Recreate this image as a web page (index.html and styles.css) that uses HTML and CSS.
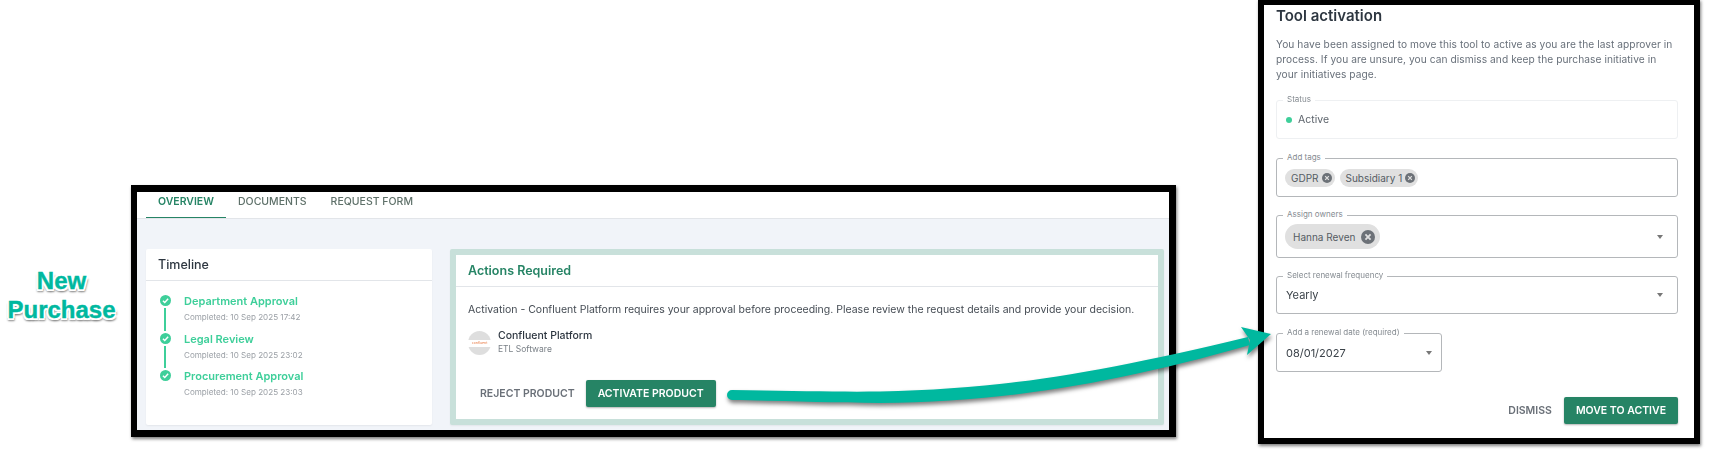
FILE: index.html
```html
<!DOCTYPE html>
<html lang="en">
<head>
    <meta charset="UTF-8">
    <title>New Purchase - Tool activation</title>
    <link rel="stylesheet" href="styles.css">
</head>
<body>
    <div class="page">
        <div class="side-label">New<br>Purchase</div>

        <section class="frame">
            <nav class="tabs">
                <span class="tab active">OVERVIEW</span>
                <span class="tab">DOCUMENTS</span>
                <span class="tab">REQUEST FORM</span>
            </nav>
            <div class="content">
                <div class="card timeline">
                    <h2 class="card-title">Timeline</h2>
                    <div class="steps">
                        <div class="step">
                            <div class="step-mark">
                                <svg class="check" viewBox="0 0 12 12"><circle cx="6" cy="6" r="6"/><path d="M3.2 6.2 5.2 8.1 8.9 4.2"/></svg>
                                <span class="step-line"></span>
                            </div>
                            <div>
                                <div class="step-title">Department Approval</div>
                                <div class="step-time">Completed: 10 Sep 2025 17:42</div>
                            </div>
                        </div>
                        <div class="step">
                            <div class="step-mark">
                                <svg class="check" viewBox="0 0 12 12"><circle cx="6" cy="6" r="6"/><path d="M3.2 6.2 5.2 8.1 8.9 4.2"/></svg>
                                <span class="step-line"></span>
                            </div>
                            <div>
                                <div class="step-title">Legal Review</div>
                                <div class="step-time">Completed: 10 Sep 2025 23:02</div>
                            </div>
                        </div>
                        <div class="step">
                            <div class="step-mark">
                                <svg class="check" viewBox="0 0 12 12"><circle cx="6" cy="6" r="6"/><path d="M3.2 6.2 5.2 8.1 8.9 4.2"/></svg>
                            </div>
                            <div>
                                <div class="step-title">Procurement Approval</div>
                                <div class="step-time">Completed: 10 Sep 2025 23:03</div>
                            </div>
                        </div>
                    </div>
                </div>

                <div class="card actions">
                    <h2 class="card-title">Actions Required</h2>
                    <div class="actions-body">
                        <p class="actions-text">Activation - Confluent Platform requires your approval before proceeding. Please review the request details and provide your decision.</p>
                        <div class="product">
                            <div class="product-logo"><span>confluent</span></div>
                            <div class="product-info">
                                <div class="product-name">Confluent Platform</div>
                                <div class="product-type">ETL Software</div>
                            </div>
                        </div>
                        <div class="button-row">
                            <button class="btn-text">REJECT PRODUCT</button>
                            <button class="btn-primary">ACTIVATE PRODUCT</button>
                        </div>
                    </div>
                </div>
            </div>
        </section>

        <section class="frame dialog">
            <h1 class="dialog-title">Tool activation</h1>
            <p class="dialog-text">You have been assigned to move this tool to active as you are the last approver in process. If you are unsure, you can dismiss and keep the purchase initiative in your initiatives page.</p>

            <div class="field field-readonly">
                <span class="field-label">Status</span>
                <span class="dot"></span>
                <span class="status-text">Active</span>
            </div>

            <div class="field">
                <span class="field-label">Add tags</span>
                <span class="chip">GDPR <svg class="chip-x" viewBox="0 0 12 12"><circle cx="6" cy="6" r="6"/><path d="M3.8 3.8 8.2 8.2M8.2 3.8 3.8 8.2"/></svg></span>
                <span class="chip">Subsidiary 1 <svg class="chip-x" viewBox="0 0 12 12"><circle cx="6" cy="6" r="6"/><path d="M3.8 3.8 8.2 8.2M8.2 3.8 3.8 8.2"/></svg></span>
            </div>

            <div class="field field-tall">
                <span class="field-label">Assign owners</span>
                <span class="chip chip-large">Hanna Reven <svg class="chip-x" viewBox="0 0 12 12"><circle cx="6" cy="6" r="6"/><path d="M3.8 3.8 8.2 8.2M8.2 3.8 3.8 8.2"/></svg></span>
                <span class="caret"></span>
            </div>

            <div class="field field-frequency">
                <span class="field-label">Select renewal frequency</span>
                <span class="field-value">Yearly</span>
                <span class="caret"></span>
            </div>

            <div class="field field-date">
                <span class="field-label">Add a renewal date (required)</span>
                <span class="field-value">08/01/2027</span>
                <span class="caret"></span>
            </div>

            <div class="dialog-buttons">
                <button class="btn-text">DISMISS</button>
                <button class="btn-primary">MOVE TO ACTIVE</button>
            </div>
        </section>

        <svg class="arrow" viewBox="0 0 1724 456">
            <path class="arrow-shaft" d="M732 390C790 391 840 392 880 391.5C1000 389 1090 375 1248 337L1250 345C1110 385 1000 402 880 403C830 403 790 401 732 400A5 5 0 0 1 732 390Z"/>
            <polygon class="arrow-shaft" points="1271,334 1241,327 1250,340 1247,355"/>
        </svg>
    </div>
</body>
</html>
```

FILE: styles.css
```css
:root {
    --green: #268465;
    --mint: #3ecf9a;
    --teal: #00b89f;
    --text: #2d3640;
    --muted: #68707a;
    --line: #e2e5e9;
}

* {
    box-sizing: border-box;
    margin: 0;
    padding: 0;
}

body {
    font-family: 'Inter', 'Liberation Sans', sans-serif;
    background: #fff;
    color: var(--text);
    overflow: hidden;
}

.page {
    position: relative;
    display: flex;
    align-items: flex-start;
    width: 1724px;
    height: 456px;
    overflow: hidden;
}

.side-label {
    width: 131px;
    padding: 266px 8px 0 0;
    text-align: center;
    font-family: 'Liberation Sans', sans-serif;
    font-size: 24px;
    font-weight: 700;
    line-height: 29px;
    color: var(--teal);
    -webkit-text-stroke: 0.4px var(--teal);
    text-shadow: 2px 0 0 #fff, -2px 0 0 #fff, 0 2px 0 #fff, 0 -2px 0 #fff,
        1.5px 1.5px 0 #fff, -1.5px 1.5px 0 #fff, 1.5px -1.5px 0 #fff, -1.5px -1.5px 0 #fff,
        2px 3px 2px #888, -1px 3px 2px #888;
}

.frame {
    width: 1045px;
    height: 252px;
    margin-top: 185px;
    border: solid #000;
    border-width: 7px 7px 7px 6px;
    box-shadow: 1px 2px 3px rgba(0, 0, 0, 0.5);
    display: flex;
    flex-direction: column;
    background: #fff;
    filter: blur(0.4px);
}

/* tabs */
.tabs {
    display: flex;
    height: 27px;
    padding-left: 9px;
    border-bottom: 1px solid var(--line);
}

.tab {
    height: 26px;
    padding: 0 12px;
    font-size: 10.5px;
    font-weight: 500;
    line-height: 20px;
    color: #5e7069;
}

.tab.active {
    width: 80px;
    color: var(--green);
    font-weight: 600;
    border-bottom: 1px solid var(--green);
}

.content {
    flex: 1;
    display: flex;
    gap: 18px;
    padding: 30px 5px 5px 9px;
    background: #f1f4f9;
}

.card {
    background: #fff;
    border-radius: 2px;
    box-shadow: 0 1px 2px rgba(0, 0, 0, 0.06);
}

.card-title {
    height: 32px;
    padding-left: 12px;
    font-size: 12.5px;
    font-weight: 500;
    line-height: 32px;
    border-bottom: 1px solid var(--line);
}

/* timeline */
.timeline {
    width: 286px;
}

.steps {
    padding: 12px 0 0 13px;
}

.step {
    display: flex;
    gap: 13px;
    height: 37.5px;
}

.step-mark {
    width: 12px;
    display: flex;
    flex-direction: column;
    align-items: center;
    padding-top: 2px;
}

.check {
    width: 11px;
    height: 11px;
    flex: none;
}

.check circle {
    fill: var(--mint);
}

.check path {
    fill: none;
    stroke: #fff;
    stroke-width: 1.6;
}

.step-line {
    flex: 1;
    width: 2px;
    margin-top: 2px;
    background: var(--mint);
}

.step-title {
    font-size: 11px;
    font-weight: 600;
    line-height: 16px;
    color: var(--mint);
}

.step-time {
    font-size: 8.1px;
    line-height: 16px;
    color: #9a9fa5;
}

/* actions required */
.actions {
    flex: 1;
    border: 6px solid #c8e0da;
}

.actions .card-title {
    color: var(--green);
    font-weight: 600;
}

.actions-body {
    padding: 14px 12px 0;
}

.actions-text {
    font-size: 10.5px;
    line-height: 18px;
    color: #454c54;
}

.product {
    display: flex;
    align-items: flex-start;
    gap: 7px;
    margin-top: 8px;
}

.product-logo {
    width: 23px;
    height: 24px;
    margin-top: 4px;
    border-radius: 50%;
    background: linear-gradient(#dedede 37%, #fff 37%, #fff 65%, #dedede 65%);
    display: flex;
    align-items: center;
    justify-content: center;
    overflow: hidden;
}

.product-logo span {
    font-size: 3.5px;
    color: #e8743b;
}

.product-info {
    padding-top: 2px;
}

.product-name {
    font-size: 10.5px;
    font-weight: 500;
    line-height: 14px;
}

.product-type {
    font-size: 8.5px;
    line-height: 13px;
    color: #7a8087;
}

.button-row {
    display: flex;
    margin-top: 24px;
}

.btn-text,
.btn-primary {
    height: 27px;
    padding: 0 12px;
    border: none;
    border-radius: 2px;
    font-family: inherit;
    font-size: 10.5px;
    font-weight: 600;
    background: none;
    color: #6a7078;
}

.button-row .btn-text {
    padding-right: 11px;
}

.btn-primary {
    background: var(--green);
    color: #fff;
    box-shadow: 0 1px 2px rgba(0, 0, 0, 0.3);
}

/* dialog */
.dialog {
    width: 442px;
    height: 445px;
    margin: -1px 0 0 82px;
    padding: 1px 16px 0 12px;
    border-width: 6px;
}

.dialog-title {
    font-size: 15px;
    font-weight: 600;
    line-height: 20px;
}

.dialog-text {
    margin: 10.5px 0 18.5px;
    font-size: 10.2px;
    line-height: 15px;
    letter-spacing: 0.06px;
    color: var(--muted);
}

.field {
    position: relative;
    display: flex;
    align-items: center;
    gap: 5px;
    height: 39px;
    margin-bottom: 18px;
    padding: 0 14px 0 8px;
    border: 1px solid #b4b7ba;
    border-radius: 3px;
}

.field-tall {
    height: 43px;
}

.field-frequency {
    height: 38px;
    margin-bottom: 19px;
}

.field-date {
    width: 166px;
    margin-bottom: 25px;
    padding-right: 9px;
}

.field-readonly {
    margin-bottom: 19px;
    border-color: #eef0f2;
    padding-left: 9px;
}

.field-label {
    position: absolute;
    top: -7px;
    left: 6px;
    padding: 0 4px;
    background: #fff;
    font-size: 8px;
    line-height: 10px;
    color: #858b91;
}

.dot {
    width: 6px;
    height: 6px;
    border-radius: 50%;
    background: var(--mint);
}

.status-text {
    margin-left: 1px;
    font-size: 10.5px;
    color: #5d646c;
}

.field-value {
    padding-left: 1px;
    font-size: 11px;
    color: #3b4249;
}

.chip {
    display: flex;
    align-items: center;
    gap: 3px;
    height: 18px;
    padding: 0 3px 0 6px;
    border-radius: 9px;
    background: #e0e0e0;
    font-size: 10px;
    color: #555c63;
}

.chip-x {
    width: 10px;
    height: 10px;
}

.chip-x circle {
    fill: #6c7177;
}

.chip-x path {
    fill: none;
    stroke: #e0e0e0;
    stroke-width: 1.5;
}

.chip-large {
    height: 25px;
    gap: 6px;
    padding: 0 5px 0 8px;
    border-radius: 13px;
}

.chip-large .chip-x {
    width: 14px;
    height: 14px;
}

.caret {
    margin-left: auto;
    border: solid transparent;
    border-width: 4px 3.5px 0;
    border-top-color: #777;
}

.dialog-buttons {
    display: flex;
    justify-content: flex-end;
}

/* arrow between the frames */
.arrow {
    position: absolute;
    top: 0;
    left: 0;
    width: 1724px;
    height: 456px;
    filter: drop-shadow(1px 3px 2px rgba(0, 0, 0, 0.5));
}

.arrow-shaft {
    fill: var(--teal);
}
```
